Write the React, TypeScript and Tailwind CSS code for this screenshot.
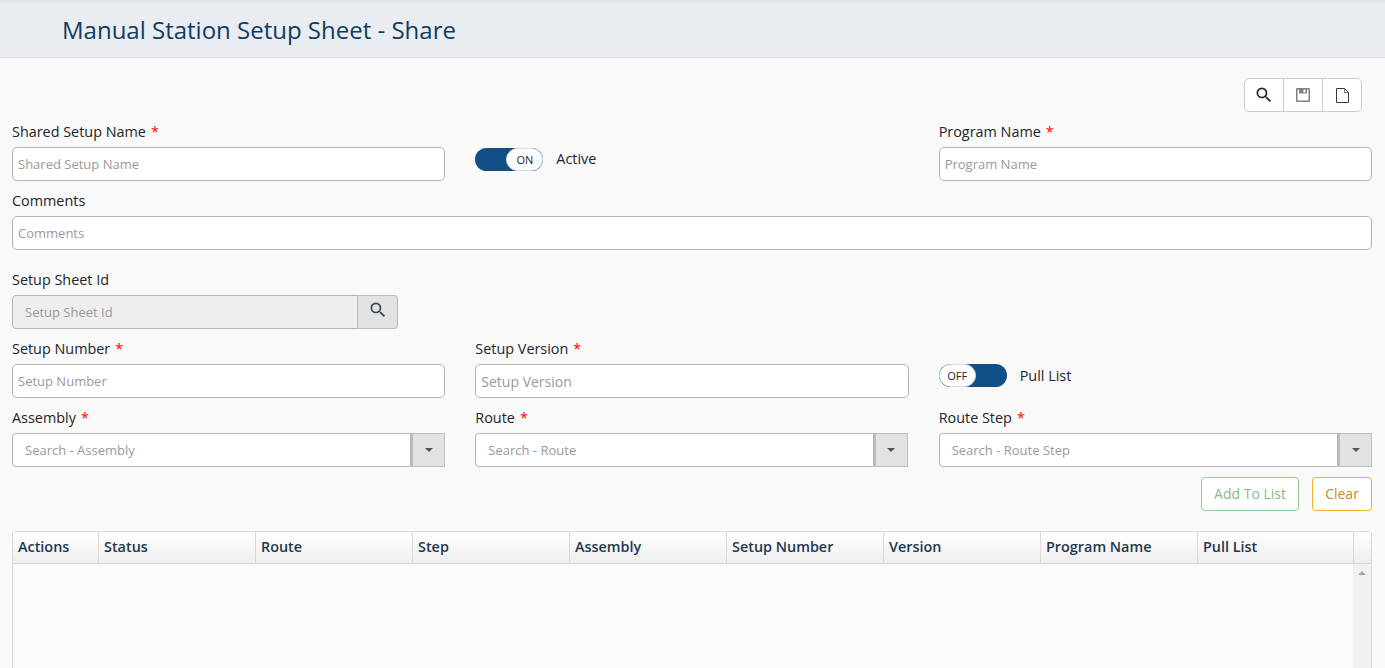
import React from "react";

const Star = () => <span className="text-[#ff0000] ml-[5px]">*</span>;

const Label = ({ text, required }: { text: string; required?: boolean }) => (
  <label className="block h-5 leading-5 text-[14.4px] text-[#212529]">
    {text}
    {required && <Star />}
  </label>
);

const SearchIcon = ({ className }: { className: string }) => (
  <svg viewBox="0 0 24 24" className={className} fill="currentColor">
    <path d="M15.5 14h-.79l-.28-.27A6.471 6.471 0 0 0 16 9.5 6.5 6.5 0 1 0 9.5 16c1.61 0 3.09-.59 4.23-1.57l.27.28v.79l5 4.99L20.49 19l-4.99-5zm-6 0C7.01 14 5 11.99 5 9.5S7.01 5 9.5 5 14 7.01 14 9.5 11.99 14 9.5 14z" />
  </svg>
);

const TextField = ({ placeholder, size }: { placeholder: string; size?: string }) => (
  <input
    placeholder={placeholder}
    className={`mt-[5px] block w-full h-[34px] bg-white border border-[#b5b5b5] rounded-[5px] px-[5px] outline-none placeholder:text-[#999999] ${size ?? "text-[13px]"}`}
  />
);

const Lookup = ({ placeholder }: { placeholder: string }) => (
  <div className="mt-[5px] flex h-[34px]">
    <input
      placeholder={placeholder}
      className="flex-1 min-w-0 bg-white border border-[#b5b5b5] rounded-l-[4px] pl-3 pr-3 pt-px text-[13px] outline-none placeholder:text-[#999999]"
    />
    <button className="w-[34px] bg-[#e1e2e4] border border-l-2 border-[#bcbcbc] flex items-center justify-center">
      <span className="w-0 h-0 border-x-[4px] border-x-transparent border-t-[4px] border-t-[#555555]" />
    </button>
  </div>
);

const Toggle = ({ on }: { on: boolean }) => (
  <div className="w-[68px] h-[23px] rounded-full bg-[#134f87] relative shrink-0">
    <div
      className={`absolute top-0 w-[37px] h-[23px] bg-white border border-[#d5dee9] rounded-full text-[11px] leading-[22px] text-center text-[#212529] ${
        on ? "right-0" : "left-0"
      }`}
    >
      {on ? "ON" : "OFF"}
    </div>
  </div>
);

const columns = ["Actions", "Status", "Route", "Step", "Assembly", "Setup Number", "Version", "Program Name", "Pull List"];

export default function App() {
  return (
    <div className="h-screen overflow-hidden bg-[#f9f9f9] font-['Open_Sans','Noto_Sans',sans-serif]">
      <header className="h-[58px] bg-[#e9ecf1] border-t-2 border-b border-t-[#e1e4e9] border-b-[#dcdfe4] pl-[62px] flex items-center">
        <h1 className="text-[24px] leading-8 text-[#0f3d61]">Manual Station Setup Sheet - Share</h1>
      </header>

      <main className="pr-[13px] pl-3 pt-5">
        <div className="flex justify-end pr-[10px] mb-2.5">
          <div className="flex h-[34px] bg-white border border-[#cccccc] rounded-[5px]">
            <button className="w-[39px] flex items-center justify-center border-r border-[#cccccc] text-[#1f2933]">
              <SearchIcon className="w-[20px] h-[20px]" />
            </button>
            <button className="w-[39px] flex items-center justify-center border-r border-[#cccccc] text-[#808080]">
              <svg viewBox="0 0 14 14" className="w-[14px] h-[14px]">
                <path d="M1 0h12a1 1 0 0 1 1 1v12a1 1 0 0 1-1 1H1a1 1 0 0 1-1-1V1a1 1 0 0 1 1-1zm.5 1.5v11h11v-11z" fill="currentColor" fillRule="evenodd" />
                <path d="M3 1h8v4.5H3z" fill="currentColor" />
                <path d="M7.5 1.5h2v3h-2z" fill="#ffffff" />
              </svg>
            </button>
            <button className="w-[38px] flex items-center justify-center text-[#2f3b4c]">
              <svg viewBox="0 0 13 15" className="w-[13px] h-[15px]" fill="none" stroke="currentColor" strokeWidth="1">
                <path d="M.5.5h8l4 4v10H.5z" />
                <path d="M8.5.5v4h4" strokeWidth="0.7" />
              </svg>
            </button>
          </div>
        </div>

        <div className="grid grid-cols-3 gap-x-[30px]">
          <div>
            <Label text="Shared Setup Name" required />
            <TextField placeholder="Shared Setup Name" />
          </div>
          <div className="flex items-center gap-[13px] pt-[15px]">
            <Toggle on />
            <span className="text-[14.4px] text-[#212529]">Active</span>
          </div>
          <div>
            <Label text="Program Name" required />
            <TextField placeholder="Program Name" />
          </div>
        </div>

        <div className="mt-2.5">
          <Label text="Comments" />
          <TextField placeholder="Comments" />
        </div>

        <div className="mt-5">
          <Label text="Setup Sheet Id" />
          <div className="mt-[5px] flex h-[34px] w-[386px]">
            <input
              disabled
              placeholder="Setup Sheet Id"
              className="flex-1 min-w-0 bg-[#eeeeee] border border-[#b5b5b5] rounded-l-[4px] px-3 pt-px text-[13px] outline-none placeholder:text-[#999999]"
            />
            <button className="w-[40px] bg-[#e1e2e4] border border-l-0 border-[#bcbcbc] rounded-r-[4px] flex items-center justify-center text-[#3a4452]">
              <SearchIcon className="w-[20px] h-[20px] -mt-1" />
            </button>
          </div>
        </div>

        <div className="grid grid-cols-3 gap-x-[30px] mt-2.5">
          <div>
            <Label text="Setup Number" required />
            <TextField placeholder="Setup Number" />
          </div>
          <div>
            <Label text="Setup Version" required />
            <TextField placeholder="Setup Version" size="text-[14px]" />
          </div>
          <div className="flex items-center gap-[13px] pt-[13px]">
            <Toggle on={false} />
            <span className="text-[14.4px] text-[#212529] pt-px">Pull List</span>
          </div>
        </div>

        <div className="grid grid-cols-3 gap-x-[30px] mt-2.5">
          <div>
            <Label text="Assembly" required />
            <Lookup placeholder="Search - Assembly" />
          </div>
          <div className="pr-px">
            <Label text="Route" required />
            <Lookup placeholder="Search - Route" />
          </div>
          <div>
            <Label text="Route Step" required />
            <Lookup placeholder="Search - Route Step" />
          </div>
        </div>

        <div className="flex justify-end gap-[13px] mt-2.5">
          <button className="h-[34px] w-[98px] pb-[2px] bg-white border border-[#8fcd9b] rounded-[4px] text-[14px] text-[#86b98f]">
            Add To List
          </button>
          <button className="h-[34px] w-[60px] pb-[2px] bg-white border border-[#eeb22c] rounded-[4px] text-[14px] text-[#c98a2c]">
            Clear
          </button>
        </div>

        <div className="mt-5 h-[400px] border border-[#d8d8d8] rounded-t-[3px] flex flex-col bg-[#fafafa]">
          <div className="grid grid-cols-[86px_157px_157px_157px_157px_157px_157px_157px_156px_1fr] h-[31px] box-content border-b border-[#d8d8d8] bg-linear-to-b from-white to-[#eeeeee]">
            {columns.map((c) => (
              <div key={c} className="border-r border-[#d8d8d8] pl-[5px] text-[14.4px] font-semibold leading-[30px] text-[#22384d]">
                {c}
              </div>
            ))}
            <div />
          </div>
          <div className="flex-1 flex justify-end">
            <div className="w-[18px] bg-[#f0f0f0] flex justify-center pt-[7px]">
              <span className="w-0 h-0 border-x-[4px] border-x-transparent border-b-[4px] border-b-[#a8a8a8]" />
            </div>
          </div>
        </div>
      </main>
    </div>
  );
}
